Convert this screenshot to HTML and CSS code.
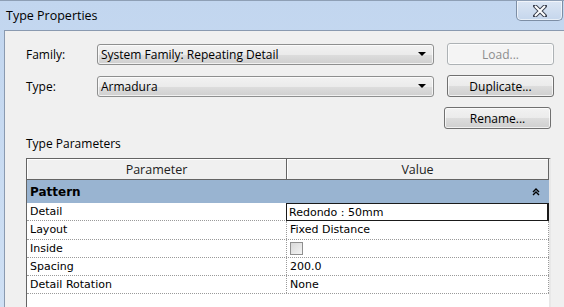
FILE: index.html
```html
<!DOCTYPE html>
<html lang="en">
<head>
  <meta charset="UTF-8">
  <title>Type Properties</title>
  <link rel="stylesheet" href="styles.css">
</head>
<body>
  <div class="window">
    <div class="titlebar">
      <span class="title">Type Properties</span>
      <div class="close">
        <svg width="14" height="12" viewBox="0 0 14 12">
          <path d="M2 1 L12 11 M12 1 L2 11" stroke="#3c4250" stroke-width="4" stroke-linecap="square"/>
          <path d="M2 1 L12 11 M12 1 L2 11" stroke="#ffffff" stroke-width="2"/>
        </svg>
      </div>
    </div>

    <div class="client">
      <div class="form-row">
        <label class="label">Family:</label>
        <div class="combo">System Family: Repeating Detail<span class="arrow"></span></div>
        <button class="btn" disabled>Load...</button>
      </div>
      <div class="form-row">
        <label class="label">Type:</label>
        <div class="combo">Armadura<span class="arrow"></span></div>
        <button class="btn">Duplicate...</button>
      </div>
      <div class="form-row end">
        <button class="btn">Rename...</button>
      </div>

      <div class="group-label">Type Parameters</div>

      <div class="grid">
        <div class="grid-head">
          <div class="head-cell">Parameter</div>
          <div class="head-cell">Value</div>
        </div>
        <div class="group-row">
          <span>Pattern</span>
          <svg class="collapse" width="8" height="8" viewBox="0 0 8 8">
            <path d="M1 4 L4 1 L7 4 M1 7 L4 4 L7 7" stroke="#000" stroke-width="1.4" fill="none"/>
          </svg>
        </div>
        <div class="prop-row">
          <div class="cell name">Detail</div>
          <div class="cell value editing">Redondo : 50mm</div>
        </div>
        <div class="prop-row">
          <div class="cell name">Layout</div>
          <div class="cell value">Fixed Distance</div>
        </div>
        <div class="prop-row">
          <div class="cell name">Inside</div>
          <div class="cell value"><span class="check"></span></div>
        </div>
        <div class="prop-row">
          <div class="cell name">Spacing</div>
          <div class="cell value">200.0</div>
        </div>
        <div class="prop-row">
          <div class="cell name">Detail Rotation</div>
          <div class="cell value">None</div>
        </div>
      </div>
    </div>
  </div>
</body>
</html>
```

FILE: styles.css
```css
body {
  margin: 0;
  overflow: hidden;
  font-family: "Open Sans", "Liberation Sans", sans-serif;
  font-size: 12px;
  color: #000;
}
.window {
  width: 564px;
  height: 307px;
  overflow: hidden;
  background: linear-gradient(#c2d6ef, #cfe0f4);
  border-top: 1px solid #8e9fb5;
  box-sizing: border-box;
  display: flex;
  flex-direction: column;
}
.titlebar {
  height: 29px;
  display: flex;
  align-items: flex-start;
  justify-content: space-between;
  flex-shrink: 0;
}
.title {
  margin: 6px 0 0 6px;
  font-size: 12.5px;
  color: #000;
}
.close {
  width: 45px;
  height: 19px;
  margin-right: 1px;
  border: 1px solid #7d8ea5;
  border-top: none;
  border-radius: 0 0 5px 5px;
  background: linear-gradient(#dbe6f4, #c5d6ec);
  box-shadow: inset 0 0 0 1px rgba(255, 255, 255, 0.6);
  display: flex;
  align-items: center;
  justify-content: center;
}
.client {
  flex: 1;
  margin-left: 4px;
  background: #f0f0f0;
  border-top: 1px solid #8a9ab0;
  border-left: 1px solid #8a9ab0;
  padding: 12px 0 0 21px;
}
.form-row {
  display: flex;
  align-items: center;
  height: 22px;
  margin-bottom: 10px;
}
.form-row.end {
  justify-content: flex-start;
  padding-left: 418px;
  margin-bottom: 0;
}
.label {
  width: 71px;
}
.combo {
  width: 332px;
  height: 19px;
  border: 1px solid #8e8f8f;
  border-radius: 3px;
  background: linear-gradient(#f2f2f2 0%, #ebebeb 50%, #dddddd 51%, #cfcfcf 100%);
  box-shadow: inset 0 0 0 1px rgba(255, 255, 255, 0.7);
  padding-left: 3px;
  display: flex;
  align-items: center;
  justify-content: space-between;
  box-sizing: content-box;
  margin-right: 13px;
}
.arrow {
  width: 0;
  height: 0;
  border-left: 4px solid transparent;
  border-right: 4px solid transparent;
  border-top: 4px solid #000;
  margin-right: 7px;
}
.btn {
  width: 107px;
  height: 22px;
  font-family: inherit;
  font-size: 12px;
  color: #000;
  border: 1px solid #707070;
  border-radius: 3px;
  background: linear-gradient(#f2f2f2 0%, #ebebeb 50%, #dddddd 51%, #cfcfcf 100%);
  box-shadow: inset 0 0 0 1px rgba(255, 255, 255, 0.7);
  padding: 0;
}
.btn:disabled {
  color: #8d8d8d;
  border-color: #adb2b5;
  background: #f4f4f4;
}
.group-label {
  margin-top: 4px;
  height: 22px;
  line-height: 22px;
}
.grid {
  margin-top: 3px;
  width: 522px;
  height: 160px;
  border-left: 1px solid #646464;
  border-top: 1px solid #646464;
  border-right: 2px solid #e8e8e8;
  background: #fff;
  font-family: "DejaVu Sans", sans-serif;
  font-size: 11px;
}
.grid-head {
  display: flex;
  height: 20px;
  background: #f0f0f0;
  border-bottom: 1px solid #646464;
}
.head-cell {
  display: flex;
  align-items: center;
  justify-content: center;
  border-right: 1px solid #646464;
  box-shadow: inset 1px 1px 0 #fff;
  color: #222;
  font-family: "Open Sans", "Liberation Sans", sans-serif;
  font-size: 12.5px;
}
.head-cell:first-child {
  width: 259px;
}
.head-cell:last-child {
  flex: 1;
}
.group-row {
  height: 23px;
  background: #99b4d1;
  display: flex;
  align-items: center;
  justify-content: space-between;
  padding: 0 9px 0 3px;
  font-weight: bold;
  font-size: 12px;
}
.prop-row {
  display: flex;
  height: 17.3px;
  border-bottom: 1px dotted #9a9a9a;
}
.cell {
  display: flex;
  align-items: center;
  padding-left: 3px;
  box-sizing: border-box;
}
.cell.name {
  width: 259px;
}
.cell.value {
  flex: 1;
  border-left: 1px dotted #9a9a9a;
  border-right: 1px dotted #9a9a9a;
}
.cell.value.editing {
  border: 1px solid #1a1a1a;
  border-right-width: 2px;
  margin-bottom: -1px;
  padding-left: 2px;
}
.check {
  width: 11px;
  height: 11px;
  border: 1px solid #8f8f8f;
  background: linear-gradient(135deg, #d8d8d8, #f4f4f4);
}
```
